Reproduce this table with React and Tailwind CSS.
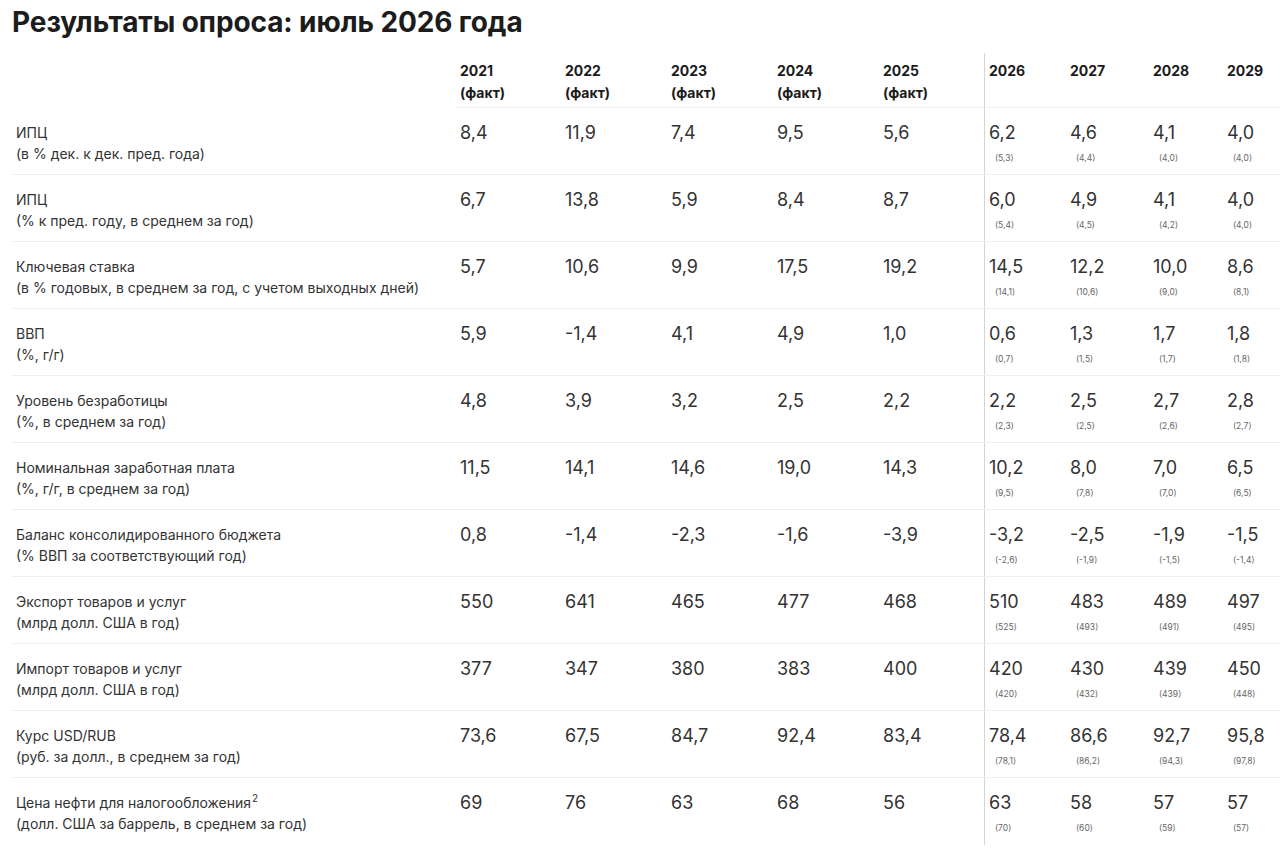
import React from "react";

const years = [
    { y: "2021", fact: true },
    { y: "2022", fact: true },
    { y: "2023", fact: true },
    { y: "2024", fact: true },
    { y: "2025", fact: true },
    { y: "2026" },
    { y: "2027" },
    { y: "2028" },
    { y: "2029" },
];

const rows = [
    { name: "ИПЦ", sub: "(в % дек. к дек. пред. года)", fact: ["8,4", "11,9", "7,4", "9,5", "5,6"], fc: [["6,2", "5,3"], ["4,6", "4,4"], ["4,1", "4,0"], ["4,0", "4,0"]] },
    { name: "ИПЦ", sub: "(% к пред. году, в среднем за год)", fact: ["6,7", "13,8", "5,9", "8,4", "8,7"], fc: [["6,0", "5,4"], ["4,9", "4,5"], ["4,1", "4,2"], ["4,0", "4,0"]] },
    { name: "Ключевая ставка", sub: "(в % годовых, в среднем за год, с учетом выходных дней)", fact: ["5,7", "10,6", "9,9", "17,5", "19,2"], fc: [["14,5", "14,1"], ["12,2", "10,6"], ["10,0", "9,0"], ["8,6", "8,1"]] },
    { name: "ВВП", sub: "(%, г/г)", fact: ["5,9", "-1,4", "4,1", "4,9", "1,0"], fc: [["0,6", "0,7"], ["1,3", "1,5"], ["1,7", "1,7"], ["1,8", "1,8"]] },
    { name: "Уровень безработицы", sub: "(%, в среднем за год)", fact: ["4,8", "3,9", "3,2", "2,5", "2,2"], fc: [["2,2", "2,3"], ["2,5", "2,5"], ["2,7", "2,6"], ["2,8", "2,7"]] },
    { name: "Номинальная заработная плата", sub: "(%, г/г, в среднем за год)", fact: ["11,5", "14,1", "14,6", "19,0", "14,3"], fc: [["10,2", "9,5"], ["8,0", "7,8"], ["7,0", "7,0"], ["6,5", "6,5"]] },
    { name: "Баланс консолидированного бюджета", sub: "(% ВВП за соответствующий год)", fact: ["0,8", "-1,4", "-2,3", "-1,6", "-3,9"], fc: [["-3,2", "-2,6"], ["-2,5", "-1,9"], ["-1,9", "-1,5"], ["-1,5", "-1,4"]] },
    { name: "Экспорт товаров и услуг", sub: "(млрд долл. США в год)", fact: ["550", "641", "465", "477", "468"], fc: [["510", "525"], ["483", "493"], ["489", "491"], ["497", "495"]] },
    { name: "Импорт товаров и услуг", sub: "(млрд долл. США в год)", fact: ["377", "347", "380", "383", "400"], fc: [["420", "420"], ["430", "432"], ["439", "439"], ["450", "448"]] },
    { name: "Курс USD/RUB", sub: "(руб. за долл., в среднем за год)", fact: ["73,6", "67,5", "84,7", "92,4", "83,4"], fc: [["78,4", "78,1"], ["86,6", "86,2"], ["92,7", "94,3"], ["95,8", "97,8"]] },
    { name: "Цена нефти для налогообложения", sup: "2", sub: "(долл. США за баррель, в среднем за год)", fact: ["69", "76", "63", "68", "56"], fc: [["63", "70"], ["58", "60"], ["57", "59"], ["57", "57"]] },
];

const grid = "grid grid-cols-[444px_105px_106px_106px_106px_105px_82px_83px_74px_1fr]";

export default function App() {
    return (
        <div className="min-h-[854px] bg-white text-[#2b2b2b] font-['Inter','Noto_Sans',sans-serif]">
            <h1 className="pl-[12px] pt-[6px] text-[28px] leading-[32px] font-bold text-[#1c1c1c] tracking-[-0.1px]">
                Результаты опроса: июль 2026 года
            </h1>

            <div className="ml-[12px] mt-[15px]">
                {/* header */}
                <div className={grid + " h-[55px]"}>
                    <div />
                    {years.map((c, i) => (
                        <div
                            key={c.y}
                            className={
                                "pl-[4px] pt-[7px] text-[14px] leading-[22px] font-bold text-[#1c1c1c] border-b border-[#f0f0f0]" +
                                (i === 5 ? " border-l border-l-[#d4d4d4]" : "")
                            }
                        >
                            <div>{c.y}</div>
                            {c.fact && <div>(факт)</div>}
                        </div>
                    ))}
                </div>

                {/* body */}
                {rows.map((r, idx) => (
                    <div
                        key={idx}
                        className={grid + " h-[67px]" + (idx < rows.length - 1 ? " border-b border-[#f0f0f0]" : "")}
                    >
                        <div className="pl-[4px] pt-[14px] text-[14px] leading-[21px] text-[#333]">
                            <div>
                                {r.name}
                                {r.sup && <sup className="text-[10px] ml-[1px] -top-[6px]">{r.sup}</sup>}
                            </div>
                            <div>{r.sub}</div>
                        </div>
                        {r.fact.map((v, i) => (
                            <div key={i} className="pl-[4px] pt-[13px] text-[18px] leading-[24px] text-[#333]">
                                {v}
                            </div>
                        ))}
                        {r.fc.map((v, i) => (
                            <div
                                key={"f" + i}
                                className={"pl-[4px] pt-[13px]" + (i === 0 ? " border-l border-[#d4d4d4]" : "")}
                            >
                                <div className="text-[18px] leading-[24px] text-[#333]">{v[0]}</div>
                                <div className="mt-[7px] ml-[6px] text-[8.5px] leading-[12px] text-[#666]">({v[1]})</div>
                            </div>
                        ))}
                    </div>
                ))}
            </div>
        </div>
    );
}
